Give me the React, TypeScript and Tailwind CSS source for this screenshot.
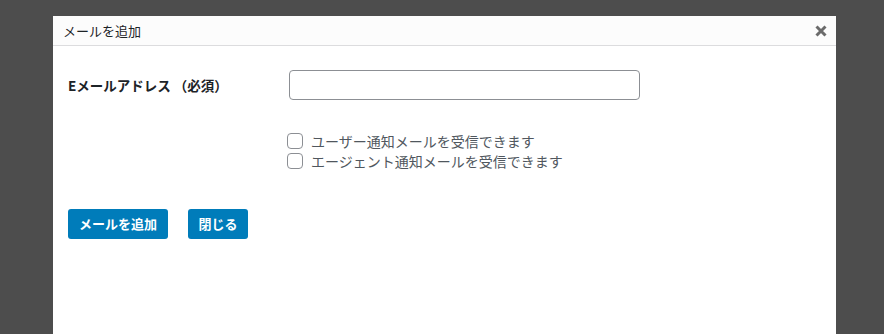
import React from 'react';

const font = { fontFamily: '"Noto Sans CJK JP", "Noto Sans", sans-serif' };

export default function App() {
  return (
    <div className="h-[334px] w-[884px] overflow-hidden bg-[#4d4d4d] pt-4 pl-[53px]" style={font}>
      <div className="flex h-[340px] w-[783px] flex-col bg-white">
        {/* Header */}
        <div className="flex h-[30px] items-center justify-between border-b border-[#dcdcde] bg-[#fcfcfc] pl-[10px] pr-[8px]">
          <span className="text-[13px] leading-none text-[#1d2327]">メールを追加</span>
          <svg width="14" height="14" viewBox="0 0 14 14" className="mt-[1px]">
            <path d="M2.5 2.5 L11.5 11.5 M11.5 2.5 L2.5 11.5" stroke="#6b6b6b" strokeWidth="3" strokeLinecap="butt" />
          </svg>
        </div>

        {/* Body */}
        <div className="flex flex-col pl-[15px] pt-[24px]">
          <div className="flex items-center">
            <label className="w-[221px] text-[13.5px] font-bold text-[#1d2327]">Eメールアドレス （必須）</label>
            <input
              type="text"
              className="h-[30px] w-[351px] rounded-[4px] border border-[#8c8f94] bg-white px-2 text-[14px] outline-none"
            />
          </div>

          <div className="mt-[33px] flex flex-col gap-[4px] pl-[219px]">
            {['ユーザー通知メールを受信できます', 'エージェント通知メールを受信できます'].map((t) => (
              <label key={t} className="flex h-[16px] items-center gap-[8px] text-[14px] text-[#50575e]">
                <span className="h-[16px] w-[16px] shrink-0 rounded-[4px] border border-[#8c8f94] bg-white" />
                <span className="leading-none">{t}</span>
              </label>
            ))}
          </div>

          <div className="mt-[40px] flex gap-[20px]">
            <button className="h-[30px] w-[100px] rounded-[3px] bg-[#007cba] text-[13px] font-semibold text-white">
              メールを追加
            </button>
            <button className="h-[30px] w-[60px] rounded-[3px] bg-[#007cba] text-[13px] font-semibold text-white">
              閉じる
            </button>
          </div>
        </div>
      </div>
    </div>
  );
}
